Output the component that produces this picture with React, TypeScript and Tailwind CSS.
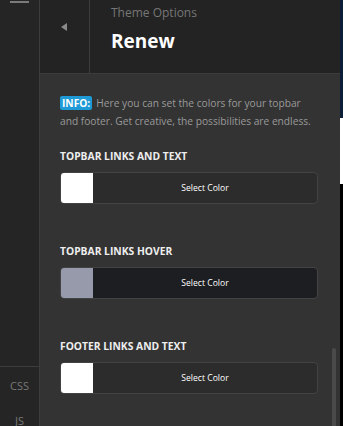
const font = { fontFamily: '"Open Sans", "Noto Sans", sans-serif' };

function ColorField({ label, swatch, dark }: { label: string; swatch: string; dark?: boolean }) {
  return (
    <div className="flex flex-col">
      <p className="h-[12px] text-[10.3px] font-bold uppercase leading-[12px] text-[#eeeeee]">
        {label}
      </p>
      <div
        className={`mt-[10px] flex h-[32px] w-[258px] overflow-hidden rounded-[4px] border border-[#434343] ${
          dark ? "bg-[#1d1e21]" : "bg-[#2c2c2c]"
        }`}
      >
        <div className="h-full w-[32px] shrink-0" style={{ background: swatch }} />
        <div className="flex flex-1 items-center justify-center text-[8.6px] text-white">Select Color</div>
      </div>
    </div>
  );
}

export default function App() {
  return (
    <div className="flex h-[426px] w-[343px] overflow-hidden bg-[#333333]" style={font}>
      {/* left rail */}
      <aside className="flex w-[40px] shrink-0 flex-col border-r border-[#3c3c3c] bg-[#252525]">
        <div className="ml-[10px] mt-[1px] h-[2px] w-[19px] bg-[#7a7a7a]" />
        <div className="mt-auto h-[60px] border-t border-[#3c3c3c] pt-[9px] text-center text-[11px] leading-[20px] text-[#777777]">
          <p>CSS</p>
          <p className="mt-[15px]">JS</p>
        </div>
      </aside>

      {/* options panel */}
      <main className="relative flex w-[300px] shrink-0 flex-col">
        <header className="flex h-[74px] shrink-0 border-b border-[#3c3c3c] bg-[#232323]">
          <div className="flex w-[50px] items-start justify-center border-r border-[#3c3c3c] pt-[23px]">
            <span className="ml-[-2px] h-0 w-0 border-y-[4px] border-r-[6px] border-y-transparent border-r-[#8a8a8a]" />
          </div>
          <div className="pl-[21px]">
            <p className="mt-[4px] text-[12px] leading-[18px] text-[#767676]">Theme Options</p>
            <h1 className="mt-[7px] text-[19px] font-bold leading-[24px] text-white">Renew</h1>
          </div>
        </header>

        <div className="flex flex-col px-[20px] pt-[20px]">
          <p className="text-[10.2px] leading-[18px] text-[#9a9a9a]">
            <span className="mr-[4px] inline-block rounded-[2px] bg-[#1e9ad6] px-[2px] font-bold leading-[14px] text-white">
              INFO:
            </span>
            Here you can set the colors for your topbar and footer. Get creative, the possibilities are endless.
          </p>
          <div className="mt-[20px] flex flex-col gap-[41px]">
            <ColorField label="Topbar Links and Text" swatch="#ffffff" />
            <ColorField label="Topbar Links Hover" swatch="#979aab" dark />
            <ColorField label="Footer Links and Text" swatch="#ffffff" />
          </div>
        </div>

        <div className="absolute right-[4px] top-[348px] h-[80px] w-[4px] rounded-full bg-[#4a4a4a]" />
      </main>

      {/* page behind */}
      <div className="flex w-[3px] flex-col">
        <div className="h-[118px] bg-[#0d1f38]" />
        <div className="h-[66px] bg-white" />
        <div className="flex-1 bg-black" />
      </div>
    </div>
  );
}
